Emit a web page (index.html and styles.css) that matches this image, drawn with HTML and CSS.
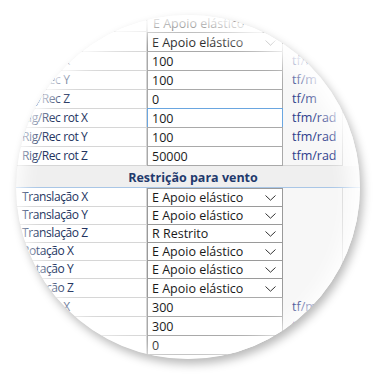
FILE: index.html
```html
<!DOCTYPE html>
<html lang="pt">
<head>
    <meta charset="UTF-8">
    <title>Propriedades - apoio</title>
    <link rel="stylesheet" href="styles.css">
</head>
<body>
<div class="stage">
    <div class="lens">
        <div class="grid">
            <div class="row combo top">
                <div class="label"></div>
                <div class="value"><div class="field plain">E Apoio elástico</div></div>
                <div class="unit"></div>
                <div class="extra"></div>
            </div>
            <div class="row">
                <div class="label"></div>
                <div class="value">
                    <div class="field select">E Apoio elástico
                        <svg class="chev" width="11" height="6" viewBox="0 0 11 6"><polyline points="0.5,0.5 5.5,5.2 10.5,0.5" /></svg>
                    </div>
                </div>
                <div class="unit blank"></div>
                <div class="extra"></div>
            </div>
            <div class="row">
                <div class="label">Rig/Rec X</div>
                <div class="value"><div class="field">100</div></div>
                <div class="unit">tf/m</div>
                <div class="extra"></div>
            </div>
            <div class="row">
                <div class="label">Rig/Rec Y</div>
                <div class="value"><div class="field">100</div></div>
                <div class="unit">tf/m</div>
                <div class="extra"></div>
            </div>
            <div class="row">
                <div class="label">Rig/Rec Z</div>
                <div class="value"><div class="field">0</div></div>
                <div class="unit">tf/m</div>
                <div class="extra"></div>
            </div>
            <div class="row">
                <div class="label">Rig/Rec rot X</div>
                <div class="value"><div class="field focus">100</div></div>
                <div class="unit">tfm/rad</div>
                <div class="extra"></div>
            </div>
            <div class="row">
                <div class="label">Rig/Rec rot Y</div>
                <div class="value"><div class="field">100</div></div>
                <div class="unit">tfm/rad</div>
                <div class="extra"></div>
            </div>
            <div class="row">
                <div class="label">Rig/Rec rot Z</div>
                <div class="value"><div class="field">50000</div></div>
                <div class="unit">tfm/rad</div>
                <div class="extra"></div>
            </div>

            <div class="section">Restrição para vento</div>

            <div class="row combo">
                <div class="label">Translação X</div>
                <div class="value"><div class="field select">E Apoio elástico<svg class="chev" width="11" height="6" viewBox="0 0 11 6"><polyline points="0.5,0.5 5.5,5.2 10.5,0.5" /></svg></div></div>
                <div class="unit blank"></div>
                <div class="extra"></div>
            </div>
            <div class="row combo">
                <div class="label">Translação Y</div>
                <div class="value"><div class="field select">E Apoio elástico<svg class="chev" width="11" height="6" viewBox="0 0 11 6"><polyline points="0.5,0.5 5.5,5.2 10.5,0.5" /></svg></div></div>
                <div class="unit blank"></div>
                <div class="extra"></div>
            </div>
            <div class="row combo">
                <div class="label">Translação Z</div>
                <div class="value"><div class="field select">R Restrito<svg class="chev" width="11" height="6" viewBox="0 0 11 6"><polyline points="0.5,0.5 5.5,5.2 10.5,0.5" /></svg></div></div>
                <div class="unit blank"></div>
                <div class="extra"></div>
            </div>
            <div class="row combo">
                <div class="label">Rotação X</div>
                <div class="value"><div class="field select">E Apoio elástico<svg class="chev" width="11" height="6" viewBox="0 0 11 6"><polyline points="0.5,0.5 5.5,5.2 10.5,0.5" /></svg></div></div>
                <div class="unit blank"></div>
                <div class="extra"></div>
            </div>
            <div class="row combo">
                <div class="label">Rotação Y</div>
                <div class="value"><div class="field select">E Apoio elástico<svg class="chev" width="11" height="6" viewBox="0 0 11 6"><polyline points="0.5,0.5 5.5,5.2 10.5,0.5" /></svg></div></div>
                <div class="unit blank"></div>
                <div class="extra"></div>
            </div>
            <div class="row">
                <div class="label">Rotação Z</div>
                <div class="value"><div class="field select">E Apoio elástico<svg class="chev" width="11" height="6" viewBox="0 0 11 6"><polyline points="0.5,0.5 5.5,5.2 10.5,0.5" /></svg></div></div>
                <div class="unit blank"></div>
                <div class="extra"></div>
            </div>
            <div class="row">
                <div class="label">Rig/Rec X</div>
                <div class="value"><div class="field">300</div></div>
                <div class="unit">tf/m</div>
                <div class="extra"></div>
            </div>
            <div class="row">
                <div class="label">Rig/Rec Y</div>
                <div class="value"><div class="field">300</div></div>
                <div class="unit">tf/m</div>
                <div class="extra"></div>
            </div>
            <div class="row">
                <div class="label">Rig/Rec Z</div>
                <div class="value"><div class="field">0</div></div>
                <div class="unit">tf/m</div>
                <div class="extra"></div>
            </div>
        </div>
        <div class="glare"></div>
    </div>
</div>
</body>
</html>
```

FILE: styles.css
```css
:root {
    --line: #d6d6d6;
    --box: #a9a9a9;
    --label: #22335e;
    --unit: #2e3e8c;
    --head: #1f3a6d;
}

* {
    margin: 0;
    padding: 0;
    box-sizing: border-box;
}

body {
    background: #fff;
    font-family: 'Open Sans', 'Noto Sans', sans-serif;
    font-size: 12.5px;
}

.stage {
    position: relative;
    width: 381px;
    height: 381px;
    overflow: hidden;
    background: #fff;
}

/* magnifier */
.lens {
    position: absolute;
    left: 16px;
    top: 15px;
    width: 344px;
    height: 344px;
    border-radius: 50%;
    overflow: hidden;
    background: #fff;
    box-shadow: 3px 5px 10px rgba(0,0,0,0.28);
}

.glare {
    position: absolute;
    inset: 0;
    border-radius: 50%;
    box-shadow: inset -3px 7px 20px 7px rgba(255,255,255,0.97);
    background: radial-gradient(circle at 45% 58%, rgba(255,255,255,0) 82%, rgba(255,255,255,0.45) 100%);
}

.grid {
    margin-left: -16px;
    margin-top: -1px;
    width: 400px;
}

.row {
    display: grid;
    grid-template-columns: 147px 136px 60px 1fr;
    height: 19px;
    line-height: 17px;
}

.row.combo {
    height: 18px;
    line-height: 16px;
}

.label {
    padding: 1px 0 0 22px;
    font-size: 12px;
    letter-spacing: -0.4px;
    color: var(--label);
    border-right: 1px solid var(--line);
    border-bottom: 1px solid var(--line);
    white-space: nowrap;
    overflow: hidden;
}

.value {
    display: flex;
}

.field {
    flex: 1;
    border: 1px solid var(--box);
    background: #fff;
    color: #1a1a1a;
    padding: 1px 0 0 4px;
    display: flex;
    align-items: center;
    justify-content: space-between;
    white-space: nowrap;
}

.field.focus {
    border-color: #6aa6e0;
}

.field.plain {
    border: none;
    border-left: 1px solid var(--line);
    padding-left: 5px;
}

.field.select {
    border-color: #9a9a9a;
    padding-right: 6px;
}

.chev polyline {
    fill: none;
    stroke: #333;
    stroke-width: 1;
}

.unit {
    background: #f7f7f7;
    color: var(--unit);
    padding: 1px 0 0 9px;
    border-right: 1px solid var(--line);
    border-bottom: 1px solid var(--line);
}

.unit.blank {
    border-bottom: none;
}

.extra {
    background: #f7f7f7;
}

.section {
    height: 23px;
    line-height: 21px;
    padding: 2px 14px 0 0;
    background: #efefef;
    border-bottom: 1px solid #a9c6e6;
    text-align: center;
    font-weight: 700;
    color: var(--head);
}
```
